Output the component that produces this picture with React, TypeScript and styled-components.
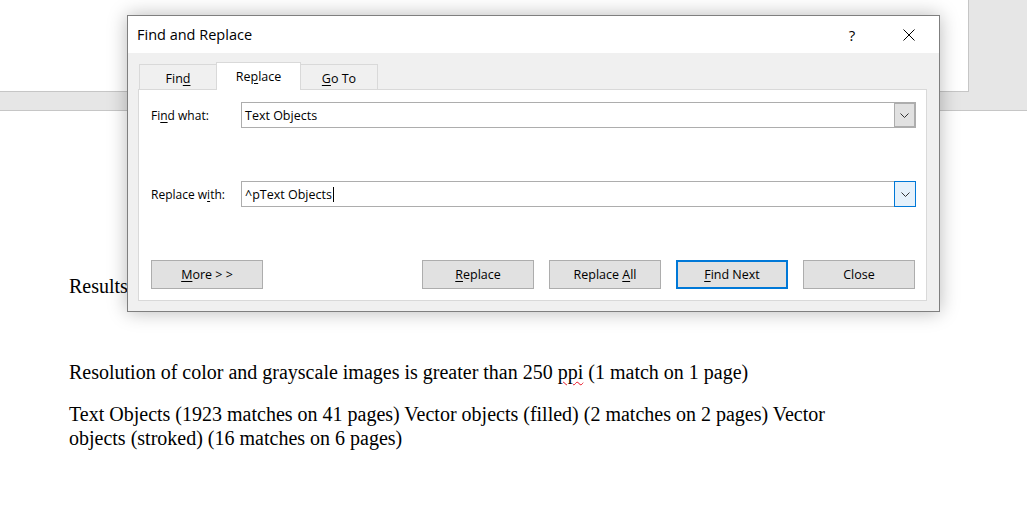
import React from "react";
import styled, { createGlobalStyle } from "styled-components";

const GlobalStyle = createGlobalStyle`
  html, body {
    margin: 0;
    padding: 0;
    background-color: #e6e6e6;
    overflow: hidden;
  }
`;

const Workspace = styled.div`
  position: relative;
  width: 1027px;
  height: 508px;
  overflow: hidden;
  display: flex;
  flex-direction: column;
  gap: 18px;
`;

const PageTop = styled.div`
  width: 968px;
  height: 91px;
  flex: none;
  background-color: #ffffff;
  border-right: 1px solid #c6c6c6;
  border-bottom: 1px solid #c6c6c6;
`;

const Page = styled.div`
  width: 968px;
  flex: 1;
  background-color: #ffffff;
  border-top: 1px solid #c6c6c6;
  border-right: 1px solid #c6c6c6;
  padding: 163px 0 0 69px;
  box-sizing: content-box;
  font-family: "Liberation Serif", "Times New Roman", serif;
  font-size: 20px;
  line-height: 24px;
  color: #000000;
`;

const Para = styled.p<{ $after?: number }>`
  margin: 0 0 ${(p) => p.$after ?? 19}px 0;
  max-width: 790px;
`;

const Squiggle = styled.span`
  text-decoration: underline wavy #e81123;
  text-decoration-thickness: 1px;
  text-underline-offset: 2px;
`;

const Dialog = styled.div`
  position: absolute;
  left: 127px;
  top: 15px;
  width: 813px;
  height: 297px;
  box-sizing: border-box;
  border: 1px solid #7f7f7f;
  background-color: #f0f0f0;
  box-shadow: 0 0 18px rgba(0, 0, 0, 0.28);
  display: flex;
  flex-direction: column;
  font-family: "Open Sans", "Noto Sans", sans-serif;
  color: #000000;
`;

const TitleBar = styled.div`
  height: 37px;
  flex: none;
  background-color: #ffffff;
  display: flex;
  align-items: center;
  padding: 0 24px 0 9px;
`;

const Title = styled.div`
  flex: 1;
  font-size: 14.5px;
  margin-top: -1px;
`;

const HelpGlyph = styled.div`
  width: 16px;
  text-align: center;
  font-size: 15px;
  margin-right: 43px;
`;

const CloseGlyph = styled.svg`
  width: 12px;
  height: 12px;
  display: block;
`;

const Body = styled.div`
  flex: 1;
  display: flex;
  flex-direction: column;
  padding: 9px 12px 10px 10px;
`;

const TabRow = styled.div`
  display: flex;
  align-items: flex-end;
  padding-left: 1px;
  height: 27px;
  position: relative;
  z-index: 1;
`;

const Tab = styled.div<{ $active?: boolean; $w: number }>`
  width: ${(p) => p.$w}px;
  height: ${(p) => (p.$active ? 28 : 25)}px;
  box-sizing: border-box;
  margin-left: -1px;
  margin-bottom: ${(p) => (p.$active ? -1 : 0)}px;
  border: 1px solid #d9d9d9;
  border-bottom: none;
  background-color: ${(p) => (p.$active ? "#ffffff" : "#f0f0f0")};
  position: relative;
  z-index: ${(p) => (p.$active ? 2 : 1)};
  display: flex;
  justify-content: center;
  align-items: center;
  padding-top: ${(p) => (p.$active ? 0 : 3)}px;
  font-size: 12.5px;
  &:first-child {
    margin-left: 0;
  }
`;

const Panel = styled.div`
  flex: 1;
  background-color: #ffffff;
  border: 1px solid #d9d9d9;
  padding: 12px 10px 11px 12px;
  display: flex;
  flex-direction: column;
`;

const FieldRow = styled.div<{ $after: number }>`
  display: grid;
  grid-template-columns: 90px 675px;
  align-items: center;
  height: 26px;
  margin-bottom: ${(p) => p.$after}px;
`;

const Label = styled.div`
  font-size: 12px;
`;

const Key = styled.span`
  text-decoration: underline;
  text-underline-offset: 2px;
`;

const Combo = styled.div`
  height: 26px;
  box-sizing: border-box;
  border: 1px solid #adadad;
  background-color: #ffffff;
  display: flex;
  align-items: stretch;
`;

const ComboText = styled.div`
  flex: 1;
  display: flex;
  align-items: center;
  padding-left: 3px;
  font-size: 12.5px;
`;

const Caret = styled.span`
  display: inline-block;
  width: 1px;
  height: 15px;
  background-color: #000000;
  margin-left: 1px;
`;

const DropButton = styled.div<{ $hot?: boolean }>`
  width: ${(p) => (p.$hot ? 22 : 21)}px;
  box-sizing: border-box;
  margin: ${(p) => (p.$hot ? "-1px -1px -1px 0" : "0")};
  border: 1px solid ${(p) => (p.$hot ? "#0078d7" : "#adadad")};
  background-color: ${(p) => (p.$hot ? "#e5f1fb" : "#e1e1e1")};
  display: flex;
  align-items: center;
  justify-content: center;
`;

const Chevron = styled.svg`
  width: 9px;
  height: 5px;
  display: block;
`;

const ButtonRow = styled.div`
  display: flex;
  justify-content: space-between;
  padding-right: 1px;
`;

const ButtonGroup = styled.div`
  display: flex;
  gap: 15px;
`;

const Button = styled.div<{ $default?: boolean }>`
  width: 112px;
  height: 29px;
  box-sizing: border-box;
  border: ${(p) => (p.$default ? "2px solid #0078d7" : "1px solid #adadad")};
  background-color: #e1e1e1;
  display: flex;
  align-items: center;
  justify-content: center;
  font-size: 12.5px;
`;

const ChevronIcon = () => (
  <Chevron viewBox="0 0 9 5">
    <path d="M0.5 0.5 L4.5 4.5 L8.5 0.5" fill="none" stroke="#333333" strokeWidth="1" />
  </Chevron>
);

export default function App() {
  return (
    <>
      <GlobalStyle />
      <Workspace>
        <PageTop />
        <Page>
          <Para $after={62}>Results</Para>
          <Para $after={18}>
            Resolution of color and grayscale images is greater than 250 <Squiggle>ppi</Squiggle> (1 match on 1 page)
          </Para>
          <Para>
            Text Objects (1923 matches on 41 pages) Vector objects (filled) (2 matches on 2 pages) Vector objects (stroked) (16 matches on 6 pages)
          </Para>
        </Page>

        <Dialog>
          <TitleBar>
            <Title>Find and Replace</Title>
            <HelpGlyph>?</HelpGlyph>
            <CloseGlyph viewBox="0 0 12 12">
              <path d="M0.5 0.5 L11.5 11.5 M11.5 0.5 L0.5 11.5" stroke="#000000" strokeWidth="1" fill="none" />
            </CloseGlyph>
          </TitleBar>
          <Body>
            <TabRow>
              <Tab $w={78}>
                Fin<Key>d</Key>
              </Tab>
              <Tab $w={85} $active>
                Re<Key>p</Key>lace
              </Tab>
              <Tab $w={78}>
                <Key>G</Key>o To
              </Tab>
            </TabRow>
            <Panel>
              <FieldRow $after={53}>
                <Label>
                  Fi<Key>n</Key>d what:
                </Label>
                <Combo>
                  <ComboText>Text Objects</ComboText>
                  <DropButton>
                    <ChevronIcon />
                  </DropButton>
                </Combo>
              </FieldRow>
              <FieldRow $after={53}>
                <Label>
                  Replace w<Key>i</Key>th:
                </Label>
                <Combo>
                  <ComboText>
                    ^pText Objects
                    <Caret />
                  </ComboText>
                  <DropButton $hot>
                    <ChevronIcon />
                  </DropButton>
                </Combo>
              </FieldRow>
              <ButtonRow>
                <Button>
                  <span>
                    <Key>M</Key>ore &gt; &gt;
                  </span>
                </Button>
                <ButtonGroup>
                  <Button>
                    <span>
                      <Key>R</Key>eplace
                    </span>
                  </Button>
                  <Button>
                    <span>
                      Replace <Key>A</Key>ll
                    </span>
                  </Button>
                  <Button $default>
                    <span>
                      <Key>F</Key>ind Next
                    </span>
                  </Button>
                  <Button>Close</Button>
                </ButtonGroup>
              </ButtonRow>
            </Panel>
          </Body>
        </Dialog>
      </Workspace>
    </>
  );
}
